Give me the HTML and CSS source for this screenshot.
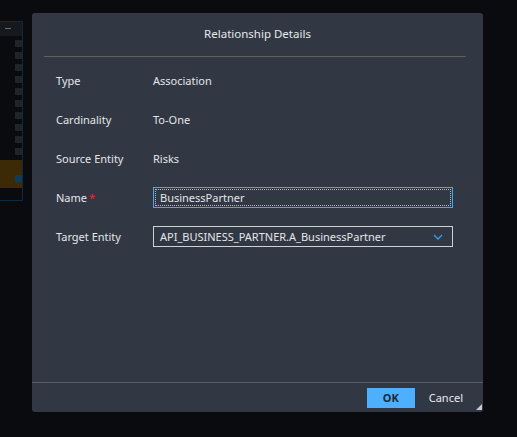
FILE: index.html
```html
<!DOCTYPE html>
<html>
<head>
<meta charset="utf-8">
<link rel="stylesheet" href="styles.css">
</head>
<body>
<div class="bg-panel">
  <div class="bg-head"><span class="bg-dash"></span></div>
  <div class="bg-list">
    <span class="sq"></span><span class="sq"></span><span class="sq"></span><span class="sq"></span><span class="sq"></span><span class="sq"></span><span class="sq"></span><span class="sq"></span><span class="sq"></span><span class="sq"></span>
  </div>
  <div class="bg-sel"><span class="sq blue"></span></div>
</div>

<div class="dialog">
  <div class="dlg-head">
    <div class="dlg-title">Relationship Details</div>
  </div>
  <div class="dlg-body">
    <div class="row"><div class="lbl">Type</div><div class="val">Association</div></div>
    <div class="row"><div class="lbl">Cardinality</div><div class="val">To-One</div></div>
    <div class="row"><div class="lbl">Source Entity</div><div class="val">Risks</div></div>
    <div class="row"><div class="lbl">Name<span class="req">*</span></div>
      <div class="input"><span class="spell">BusinessPartner</span></div></div>
    <div class="row"><div class="lbl">Target Entity</div>
      <div class="select"><span>API_BUSINESS_PARTNER.A_BusinessPartner</span>
        <svg class="chev" width="10" height="6" viewBox="0 0 10 6"><path d="M1 1 L5 5 L9 1" fill="none" stroke="#3b9be6" stroke-width="1.3"/></svg>
      </div></div>
  </div>
  <div class="dlg-foot">
    <div class="btn-ok">OK</div>
    <div class="btn-cancel">Cancel</div>
  </div>
  <svg class="grip" width="6" height="6" viewBox="0 0 6 6"><path d="M6 0 L6 6 L0 6 Z" fill="#c8cbd0"/></svg>
</div>
</body>
</html>
```
FILE: styles.css
```css
* { box-sizing: border-box; }
html, body { margin: 0; height: 100%; }
body {
  background: #090b0e;
  font-family: "Noto Sans", "Open Sans", sans-serif;
  font-size: 11px;
  color: #e4e6e8;
  overflow: hidden;
  position: relative;
}
.bg-panel {
  position: absolute;
  left: -2px;
  top: 21px;
  width: 25px;
  height: 180px;
  border: 1px solid #0d2a42;
  display: flex;
  flex-direction: column;
}
.bg-head {
  height: 14px;
  background: #15181c;
  position: relative;
}
.bg-dash {
  position: absolute;
  left: 6px;
  top: 6px;
  width: 6px;
  height: 1px;
  background: #6a6e72;
}
.bg-list {
  display: flex;
  flex-direction: column;
  align-items: flex-end;
  gap: 5px;
  padding-top: 4px;
  height: 124px;
}
.sq {
  display: block;
  width: 7px;
  height: 7px;
  background: #1f2429;
}
.bg-sel {
  height: 28px;
  background: #3c2a07;
  display: flex;
  justify-content: flex-end;
  align-items: flex-end;
  padding-bottom: 6px;
}
.sq.blue { background: #0c3d5e; }

.dialog {
  position: absolute;
  left: 32px;
  top: 13px;
  width: 451px;
  height: 399px;
  background: #313844;
  border-radius: 3px;
  display: flex;
  flex-direction: column;
}
.dlg-head {
  height: 44px;
  margin: 0 17px 0 12px;
  border-bottom: 1px solid #5d605f;
  display: flex;
  align-items: center;
  justify-content: center;
  padding-left: 5px;
}
.dlg-title {
  font-size: 11.5px;
  color: #e6e8ea;
  margin-top: -2px;
}
.dlg-body {
  flex: 1;
  padding: 4px 29px 0 24px;
}
.row {
  height: 39px;
  display: flex;
  align-items: center;
}
.lbl {
  width: 97px;
  flex: none;
}
.req {
  color: #e0302f;
  margin-left: 2px;
}
.input {
  width: 300px;
  height: 21px;
  border: 1px solid #49a7f2;
  display: flex;
  align-items: center;
  padding-left: 6px;
  outline: 1px dotted #8cc8f5;
  outline-offset: -3px;
}
.spell {
  text-decoration: underline dotted #d8303a;
  text-underline-offset: 3px;
}
.select {
  width: 300px;
  height: 21px;
  border: 1px solid #cfd2d5;
  display: flex;
  align-items: center;
  justify-content: space-between;
  padding: 0 9px 0 6px;
}
.chev { display: block; }
.dlg-foot {
  height: 30px;
  border-top: 1px solid #5d605f;
  display: flex;
  align-items: center;
  justify-content: flex-end;
  padding-right: 20px;
}
.btn-ok {
  width: 48px;
  height: 20px;
  background: #4cb0ff;
  color: #1e2a38;
  font-weight: bold;
  display: flex;
  align-items: center;
  justify-content: center;
}
.btn-cancel {
  margin-left: 14px;
  color: #e8eaec;
}
.grip {
  position: absolute;
  right: 1px;
  bottom: 2px;
}
```
